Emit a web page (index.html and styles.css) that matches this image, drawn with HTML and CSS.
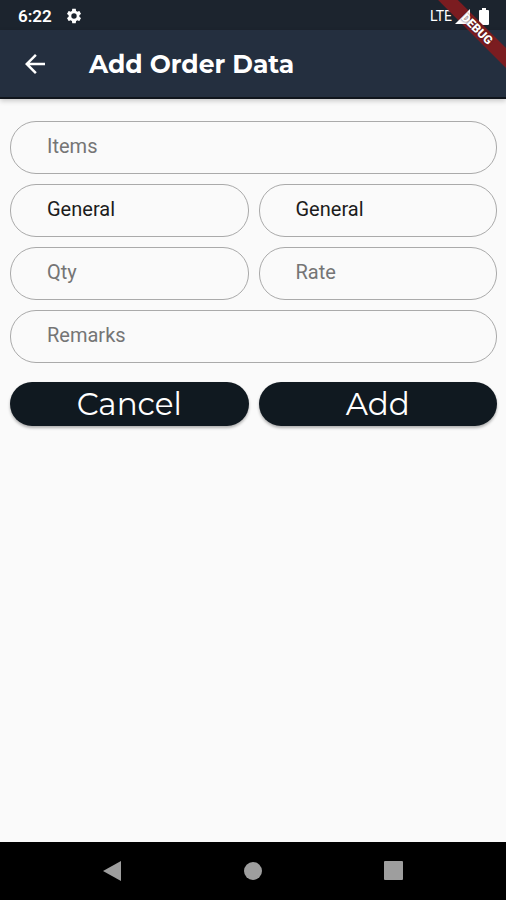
FILE: index.html
```html
<!DOCTYPE html>
<html lang="en">
<head>
    <meta charset="UTF-8">
    <meta name="viewport" content="width=device-width, initial-scale=1.0">
    <title>Add Order Data</title>
    <link rel="stylesheet" href="styles.css">
</head>
<body>
    <div class="status-bar">
        <span class="clock">6:22</span>
        <svg class="gear" width="18" height="18" viewBox="0 0 24 24" fill="#fff">
            <path d="M19.14 12.94c.04-.3.06-.61.06-.94s-.02-.64-.07-.94l2.03-1.58c.18-.14.23-.41.12-.61l-1.92-3.32c-.12-.22-.37-.29-.59-.22l-2.39.96c-.5-.38-1.03-.7-1.62-.94l-.36-2.54c-.04-.24-.24-.41-.48-.41h-3.84c-.24 0-.43.17-.47.41l-.36 2.54c-.59.24-1.13.57-1.62.94l-2.39-.96c-.22-.08-.47 0-.59.22L2.74 8.87c-.12.21-.08.47.12.61l2.03 1.58c-.05.3-.09.63-.09.94s.02.64.07.94l-2.03 1.58c-.18.14-.23.41-.12.61l1.92 3.32c.12.22.37.29.59.22l2.39-.96c.5.38 1.03.7 1.62.94l.36 2.54c.05.24.24.41.48.41h3.84c.24 0 .44-.17.47-.41l.36-2.54c.59-.24 1.13-.56 1.62-.94l2.39.96c.22.08.47 0 .59-.22l1.92-3.32c.12-.22.07-.47-.12-.61l-2.01-1.58zM12 15.6A3.6 3.6 0 1 1 12 8.400a3.6 3.6 0 0 1 0 7.200z"/>
        </svg>
        <span class="network">LTE</span>
        <svg class="signal" width="15" height="15" viewBox="0 0 15 15" fill="#fff">
            <path d="M0 15L15 0v15z"/>
        </svg>
        <svg class="battery" width="10" height="17" viewBox="0 0 10 17" fill="#fff">
            <path d="M3 0h4v2h2a1 1 0 0 1 1 1v13a1 1 0 0 1-1 1H1a1 1 0 0 1-1-1V3a1 1 0 0 1 1-1h2z"/>
        </svg>
    </div>

    <header class="app-bar">
        <button class="back" type="button" aria-label="Back">
            <svg width="30" height="30" viewBox="0 0 24 24" fill="#fff">
                <path d="M20 11H7.830l5.590-5.590L12 4l-8 8 8 8 1.410-1.410L7.830 13H20v-2z"/>
            </svg>
        </button>
        <h1>Add Order Data</h1>
    </header>

    <div class="ribbon"><span>DEBUG</span></div>

    <main>
        <form class="order-form">
            <input class="field wide" type="text" placeholder="Items" aria-label="Items">
            <select class="field" aria-label="Item group">
                <option>General</option>
            </select>
            <select class="field" aria-label="Price group">
                <option>General</option>
            </select>
            <input class="field" type="text" placeholder="Qty" aria-label="Qty">
            <input class="field" type="text" placeholder="Rate" aria-label="Rate">
            <input class="field wide" type="text" placeholder="Remarks" aria-label="Remarks">
            <button class="action" type="button">Cancel</button>
            <button class="action" type="button">Add</button>
        </form>
    </main>

    <nav class="nav-bar">
        <button type="button" aria-label="Back">
            <svg width="20" height="22" viewBox="0 0 20 22" fill="#9e9e9e"><path d="M19 1v20L1 11z"/></svg>
        </button>
        <button type="button" aria-label="Home">
            <svg width="20" height="20" viewBox="0 0 20 20" fill="#9e9e9e"><circle cx="10" cy="10" r="9"/></svg>
        </button>
        <button type="button" aria-label="Recent apps">
            <svg width="20" height="20" viewBox="0 0 20 20" fill="#9e9e9e"><rect width="19" height="19" rx="1"/></svg>
        </button>
    </nav>
</body>
</html>
```
FILE: styles.css
```css
* {
    box-sizing: border-box;
}
body {
    margin: 0;
    min-height: 100vh;
    display: flex;
    flex-direction: column;
    background: #fafafa;
    font-family: Roboto, sans-serif;
    position: relative;
}
button {
    border: none;
    background: none;
    padding: 0;
    cursor: pointer;
}
svg {
    display: block;
}
.status-bar {
    display: flex;
    align-items: center;
    height: 30px;
    padding: 2px 17px 0 18px;
    background: #1c242e;
    color: #fff;
}
.clock {
    font-size: 17px;
    font-weight: 600;
}
.gear {
    margin-left: 13px;
}
.network {
    margin-left: auto;
    font-size: 14px;
}
.signal {
    position: relative;
    z-index: 1;
    margin-left: 3px;
}
.battery {
    margin-left: 9px;
}
.app-bar {
    display: flex;
    align-items: center;
    height: 69px;
    padding: 0 20px;
    background: #242f3f;
    border-bottom: 2px solid #10151c;
    box-shadow: 0 2px 5px rgba(0,0,0,0.2);
}
.app-bar h1 {
    margin: 0 0 0 39px;
    font-family: Montserrat, Inter, sans-serif;
    font-size: 25px;
    font-weight: 700;
    color: #fff;
}
/* corner banner: the band sits under the signal icon, its text over it */
.ribbon {
    position: absolute;
    top: 0;
    right: 0;
    width: 68px;
    height: 70px;
    overflow: hidden;
}
.ribbon::before,
.ribbon span {
    position: absolute;
    top: 22px;
    left: -16px;
    width: 110px;
    height: 14px;
    transform: rotate(45deg);
}
.ribbon::before {
    content: "";
    background: #7b1c20;
}
.ribbon span {
    z-index: 2;
    color: #fff;
    font-size: 12px;
    font-weight: 900;
    line-height: 14px;
    text-align: center;
    text-shadow: 0 0 2px rgba(60,20,20,0.9);
}
main {
    flex: 1;
    padding: 22px 9px 22px 10px;
}
.order-form {
    display: grid;
    grid-template-columns: 1fr 1fr;
    gap: 10px;
}
.field {
    appearance: none;
    width: 100%;
    height: 53px;
    padding: 0 36px 3px;
    border: 1px solid #aaa;
    border-radius: 26px;
    background: transparent;
    font-family: Roboto, sans-serif;
    font-size: 20px;
    color: #1c1c1c;
}
.field::placeholder {
    color: #757575;
    opacity: 1;
}
.wide {
    grid-column: 1 / -1;
}
.action {
    height: 44px;
    margin-top: 9px;
    border-radius: 22px;
    background: #101920;
    box-shadow: 0 2px 3px rgba(0,0,0,0.3);
    color: #fff;
    font-family: Montserrat, Inter, sans-serif;
    font-size: 31px;
    font-weight: 400;
    line-height: 44px;
}
.nav-bar {
    display: grid;
    grid-template-columns: repeat(3, 1fr);
    height: 58px;
    padding: 0 42px;
    background: #000;
}
.nav-bar button {
    display: flex;
    align-items: center;
    justify-content: center;
}
```
